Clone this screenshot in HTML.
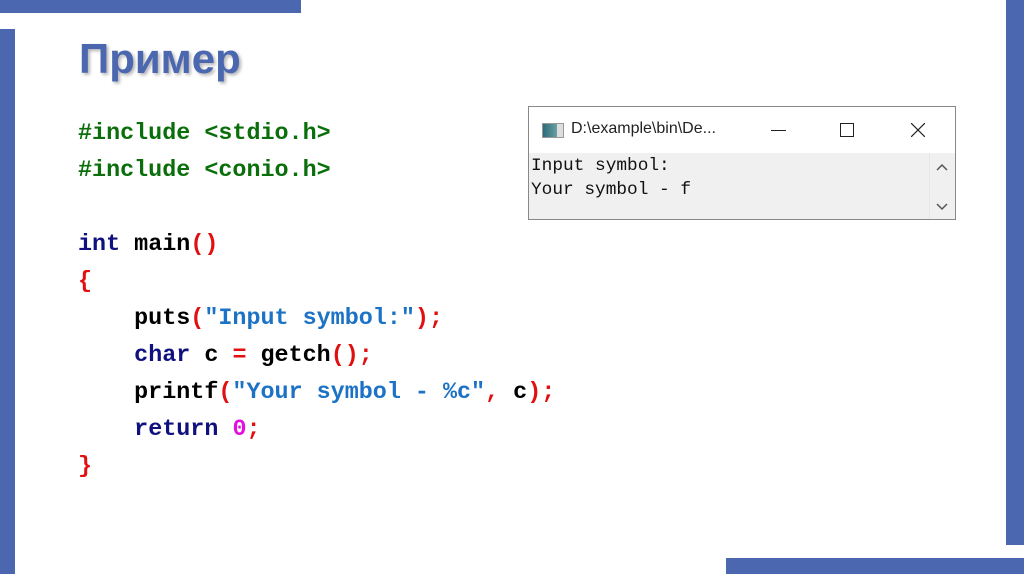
<!DOCTYPE html>
<html><head><meta charset="utf-8"><style>
body{margin:0;width:1024px;height:574px;background:#fff;position:relative;overflow:hidden;font-family:"Liberation Sans",sans-serif}
.b{position:absolute;background:#4a67b0}
.code{position:absolute;left:78px;font-family:"Liberation Mono",monospace;font-weight:bold;font-size:23.4px;white-space:pre;line-height:37px;color:#000}
.g{color:#0a6e0a}.k{color:#10107e}.r{color:#e01010}.s{color:#1c72c4}.m{color:#e010e0}
.win{position:absolute;left:528px;top:106px;width:426px;height:112px;border:1px solid #888;background:#fff}
.con{position:absolute;left:0;top:46px;width:426px;height:66px;background:#f0f0f0}
.ct{position:absolute;left:2px;font-family:"Liberation Mono",monospace;font-size:17.8px;white-space:pre;color:#111}
</style></head><body>
<div class="b" style="left:0;top:0;width:301px;height:13px"></div>
<div class="b" style="left:0;top:29px;width:15px;height:545px"></div>
<div class="b" style="left:1006px;top:0;width:18px;height:545px"></div>
<div class="b" style="left:726px;top:558px;width:298px;height:16px"></div>
<div style="position:absolute;left:79px;top:35px;font-size:42px;font-weight:bold;color:#4a67b0;text-shadow:2px 2px 3px rgba(0,0,0,.3)">Пример</div>
<div class="code" style="top:116px"><span class="g">#include &lt;stdio.h&gt;
#include &lt;conio.h&gt;</span>

<span class="k">int</span> main<span class="r">()</span>
<span class="r">{</span>
    puts<span class="r">(</span><span class="s">"Input symbol:"</span><span class="r">);</span>
    <span class="k">char</span> c <span class="r">=</span> getch<span class="r">();</span>
    printf<span class="r">(</span><span class="s">"Your symbol - %c"</span><span class="r">,</span> c<span class="r">);</span>
    <span class="k">return</span> <span class="m">0</span><span class="r">;</span>
<span class="r">}</span></div>
<div class="win">
<div style="position:absolute;left:13px;top:16px;width:20px;height:13px;border:1px solid #999;background:linear-gradient(90deg,#2a6a7a,#6aa0a0 70%,#ddd 70%)"></div>
<div style="position:absolute;left:42px;top:13px;font-size:16px;color:#222">D:\example\bin\De...</div>
<div style="position:absolute;left:242px;top:23px;width:15px;height:1px;background:#222"></div>
<div style="position:absolute;left:311px;top:16px;width:12px;height:12px;border:1px solid #222"></div>
<svg style="position:absolute;left:382px;top:16px" width="14" height="14"><path d="M0 0L14 14M14 0L0 14" stroke="#222" stroke-width="1.2"/></svg>
<div class="con">
<div class="ct" style="top:3px">Input symbol:</div>
<div class="ct" style="top:27px">Your symbol - f</div>
<div style="position:absolute;left:400px;top:0;width:25px;height:66px;background:#f0f0f0;border-left:1px solid #e6e6e6"></div>
<svg style="position:absolute;left:407px;top:10px" width="12" height="8"><path d="M1 7L6 2L11 7" stroke="#555" stroke-width="1.5" fill="none"/></svg>
<svg style="position:absolute;left:407px;top:50px" width="12" height="8"><path d="M1 1L6 6L11 1" stroke="#555" stroke-width="1.5" fill="none"/></svg>
</div>
</div>
</body></html>
